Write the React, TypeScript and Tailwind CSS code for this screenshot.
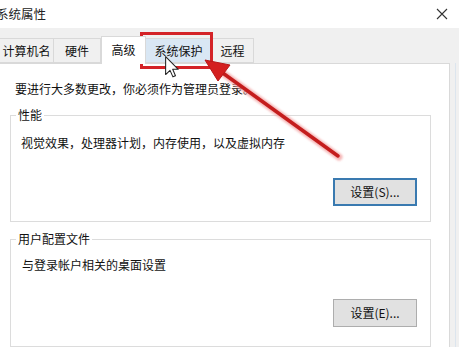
import React from "react";

const font = { fontFamily: '"Noto Sans CJK SC", "Noto Sans", sans-serif' };

function Tab({ label, w, selected, hover }: { label: string; w: string; selected?: boolean; hover?: boolean }) {
  if (selected) {
    return (
      <div className={`${w} h-[28px] -mt-[3px] -mb-[1px] relative z-10 bg-white border border-b-0 border-[#d9d9d9] flex items-center justify-center pb-[2px] text-[12px] text-[#111]`}>
        {label}
      </div>
    );
  }
  return (
    <div
      className={`${w} h-[25px] border border-l-0 border-[#d9d9d9] flex items-center justify-center text-[12px] text-[#111] ${hover ? "bg-[#d9e7f4]" : "bg-[#f0f0f0]"}`}
    >
      {label}
    </div>
  );
}

function Button({ label, focused }: { label: string; focused?: boolean }) {
  return (
    <div
      className={`w-[84px] h-[28px] flex items-center justify-center text-[12px] text-[#111] bg-[#e1e1e1] ${
        focused ? "border-2 border-[#3a7ab0]" : "border border-[#adadad]"
      }`}
    >
      {label}
    </div>
  );
}

export default function App() {
  return (
    <div className="relative w-[459px] h-[347px] overflow-hidden bg-[#f0f0f0] flex flex-col" style={font}>
      {/* title bar */}
      <div className="h-[28px] bg-white flex items-center justify-between shrink-0">
        <span className="-ml-[4px] text-[12.5px] text-[#222]">系统属性</span>
        <svg width="12" height="12" viewBox="0 0 12 12" className="mr-[11px]">
          <path d="M1 1 L11 11 M11 1 L1 11" stroke="#333" strokeWidth="1.1" />
        </svg>
      </div>

      {/* tabs */}
      <div className="mt-[10px] flex items-end h-[25px] shrink-0">
        <Tab label="计算机名" w="w-[54px]" />
        <Tab label="硬件" w="w-[47px]" />
        <Tab label="高级" w="w-[45px]" selected />
        <Tab label="系统保护" w="w-[66px]" hover />
        <Tab label="远程" w="w-[42px]" />
      </div>

      {/* content */}
      <div className="flex flex-1">
        <div className="w-[451px] -ml-[1px] bg-white border border-[#d9d9d9] border-b-0 flex flex-col pt-[18px]">
          <p className="ml-[15px] text-[12px] text-[#111] leading-[14px]">要进行大多数更改，你必须作为管理员登录。</p>

          <fieldset className="mt-[12px] ml-[10px] w-[421px] h-[114px] border border-[#dcdcdc]">
            <legend className="ml-[5px] px-[2px] text-[12px] text-[#111] leading-[14px]">性能</legend>
            <p className="ml-[10px] mt-[14px] text-[12px] text-[#111] leading-[14px]">视觉效果，处理器计划，内存使用，以及虚拟内存</p>
            <div className="mt-[28px] mr-[13px] flex justify-end">
              <Button label="设置(S)..." focused />
            </div>
          </fieldset>

          <fieldset className="mt-[10px] ml-[10px] w-[421px] h-[115px] border border-[#dcdcdc]">
            <legend className="ml-[5px] px-[2px] text-[12px] text-[#111] leading-[14px]">用户配置文件</legend>
            <p className="ml-[11px] mt-[12px] text-[12px] text-[#111] leading-[14px]">与登录帐户相关的桌面设置</p>
            <div className="mt-[27px] mr-[13px] flex justify-end">
              <Button label="设置(E)..." />
            </div>
          </fieldset>
        </div>
        <div className="flex-1 flex">
          <div className="ml-[5px] w-[1px] bg-[#dce5ee]" />
        </div>
      </div>

      {/* red highlight rectangle */}
      <div className="absolute left-[140px] top-[32px] w-[73px] h-[37px] border-[3px] border-[#d42327]" />

      {/* cursor */}
      <svg className="absolute left-[165px] top-[56px]" width="14" height="22" viewBox="0 0 12 19">
        <path d="M0.5 0.5 L0.5 16 L4.3 12.4 L6.8 18 L9 17 L6.6 11.5 L11.4 11.5 Z" fill="#fff" stroke="#222" strokeWidth="0.9" strokeLinejoin="round" />
      </svg>

      {/* red arrow */}
      <svg className="absolute left-0 top-0 pointer-events-none" width="459" height="347" viewBox="0 0 459 347">
        <defs>
          <filter id="sh" x="-20%" y="-20%" width="140%" height="140%">
            <feGaussianBlur stdDeviation="1.2" />
          </filter>
        </defs>
        <line x1="339" y1="157" x2="220" y2="71" stroke="#f3a3a3" strokeWidth="7" strokeLinecap="round" filter="url(#sh)" opacity="0.8" />
        <line x1="338" y1="156" x2="220" y2="71" stroke="#c41d1d" strokeWidth="3.5" strokeLinecap="round" />
        <polygon points="205,60 218,81 230,65" fill="#d41f1f" stroke="#b81818" strokeWidth="1" strokeLinejoin="round" />
      </svg>
    </div>
  );
}
